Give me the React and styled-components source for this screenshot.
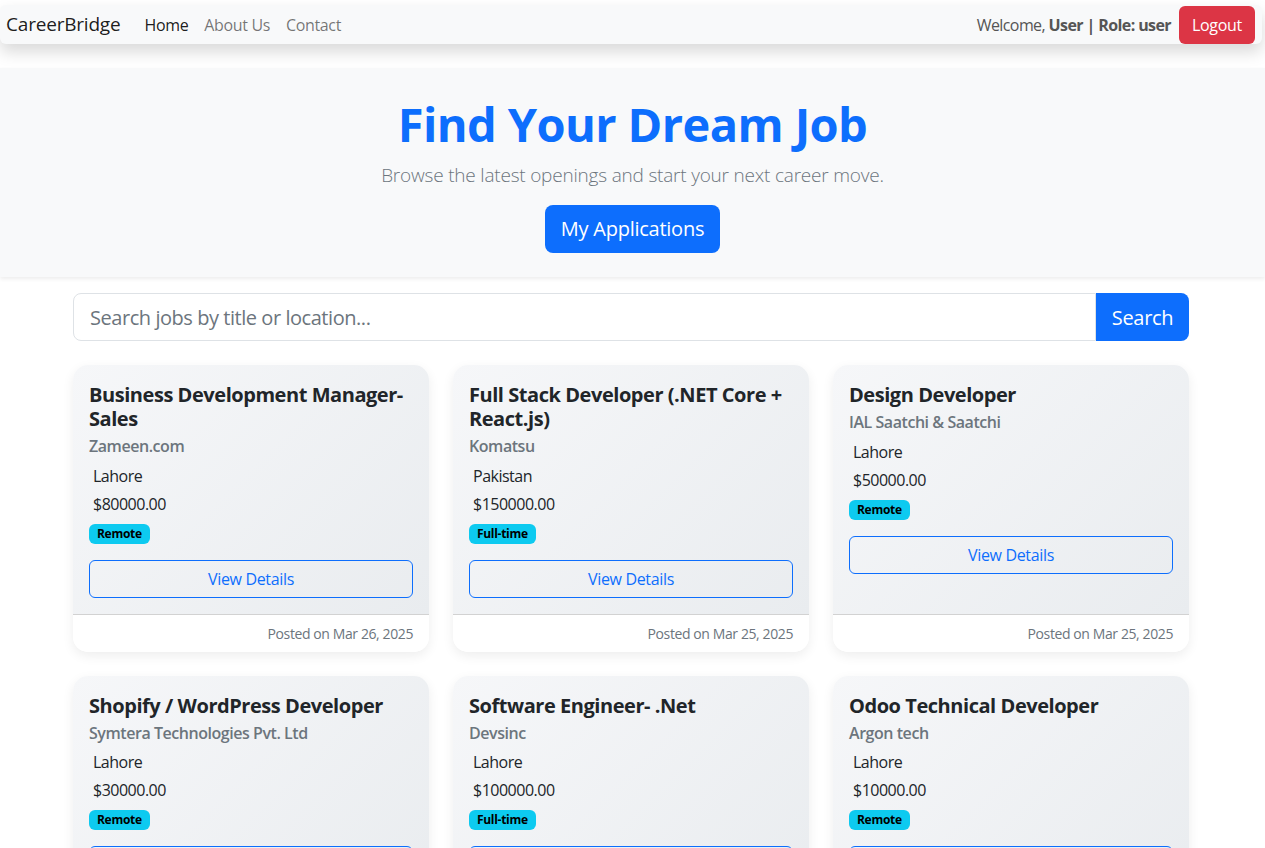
import React from "react";
import styled, { createGlobalStyle } from "styled-components";

const jobs = [
  {
    id: 1,
    title: "Business Development Manager-Sales",
    company: "Zameen.com",
    location: "Lahore",
    salary: "$80000.00",
    type: "Remote",
    posted: "Mar 26, 2025",
  },
  {
    id: 2,
    title: "Full Stack Developer (.NET Core + React.js)",
    company: "Komatsu",
    location: "Pakistan",
    salary: "$150000.00",
    type: "Full-time",
    posted: "Mar 25, 2025",
  },
  {
    id: 3,
    title: "Design Developer",
    company: "IAL Saatchi & Saatchi",
    location: "Lahore",
    salary: "$50000.00",
    type: "Remote",
    posted: "Mar 25, 2025",
  },
  {
    id: 4,
    title: "Shopify / WordPress Developer",
    company: "Symtera Technologies Pvt. Ltd",
    location: "Lahore",
    salary: "$30000.00",
    type: "Remote",
    posted: "Mar 24, 2025",
  },
  {
    id: 5,
    title: "Software Engineer- .Net",
    company: "Devsinc",
    location: "Lahore",
    salary: "$100000.00",
    type: "Full-time",
    posted: "Mar 24, 2025",
  },
  {
    id: 6,
    title: "Odoo Technical Developer",
    company: "Argon tech",
    location: "Lahore",
    salary: "$10000.00",
    type: "Remote",
    posted: "Mar 23, 2025",
  },
];

const App = () => {
  return (
    <>
      <GlobalStyle />
      <Navbar>
        <NavLeft>
          <Brand href="#">CareerBridge</Brand>
          <NavLink href="#" $active>
            Home
          </NavLink>
          <NavLink href="#">About Us</NavLink>
          <NavLink href="#">Contact</NavLink>
        </NavLeft>
        <NavRight>
          <Welcome>
            Welcome, <strong>User | Role: user</strong>
          </Welcome>
          <LogoutButton>Logout</LogoutButton>
        </NavRight>
      </Navbar>

      <Hero>
        <HeroTitle>Find Your Dream Job</HeroTitle>
        <HeroLead>Browse the latest openings and start your next career move.</HeroLead>
        <PrimaryButton>My Applications</PrimaryButton>
      </Hero>

      <Container>
        <SearchGroup>
          <SearchInput placeholder="Search jobs by title or location..." />
          <SearchButton>Search</SearchButton>
        </SearchGroup>

        <JobGrid>
          {jobs.map((job) => (
            <JobCard key={job.id}>
              <CardBody>
                <JobTitle>{job.title}</JobTitle>
                <Company>{job.company}</Company>
                <Info>{job.location}</Info>
                <Info $last>{job.salary}</Info>
                <BadgeRow>
                  <Badge>{job.type}</Badge>
                </BadgeRow>
                <OutlineButton>View Details</OutlineButton>
              </CardBody>
              <CardFooter>Posted on {job.posted}</CardFooter>
            </JobCard>
          ))}
        </JobGrid>
      </Container>
    </>
  );
};

export default App;

const GlobalStyle = createGlobalStyle`
  * {
    box-sizing: border-box;
  }
  body {
    margin: 0;
    background: #fff;
    color: #212529;
    font-family: "Open Sans", "Noto Sans", sans-serif;
    font-size: 16px;
    line-height: 1.5;
  }
  button, input {
    font-family: inherit;
  }
`;

const Navbar = styled.nav`
  display: flex;
  align-items: center;
  justify-content: space-between;
  height: 39px;
  margin: 5px 3px 0 0;
  padding: 0 7px 0 6px;
  background: #f8f9fa;
  border-radius: 6px;
  box-shadow: 0 8px 16px rgba(0, 0, 0, 0.15);
`;

const NavLeft = styled.div`
  display: flex;
  align-items: center;
`;

const Brand = styled.a`
  font-size: 19px;
  letter-spacing: -0.2px;
  color: rgba(0, 0, 0, 0.9);
  text-decoration: none;
  margin-right: 16px;
`;

const NavLink = styled.a`
  padding: 8px;
  font-size: 16px;
  letter-spacing: -0.35px;
  text-decoration: none;
  color: ${({ $active }) => ($active ? "rgba(0, 0, 0, 0.9)" : "rgba(0, 0, 0, 0.55)")};
`;

const NavRight = styled.div`
  display: flex;
  align-items: center;
  gap: 8px;
`;

const Welcome = styled.span`
  color: #555;
  font-size: 16px;
  letter-spacing: -0.6px;
  strong {
    font-weight: 700;
  }
`;

const LogoutButton = styled.button`
  height: 38px;
  padding: 6px 13px;
  border: none;
  border-radius: 6px;
  background: #dc3545;
  color: #fff;
  font-size: 16px;
  line-height: 24px;
  letter-spacing: -0.3px;
`;

const Hero = styled.header`
  margin-top: 24px;
  padding: 28px 0 24px;
  text-align: center;
  background: #f8f9fa;
  box-shadow: 0 2px 4px rgba(0, 0, 0, 0.075);
`;

const HeroTitle = styled.h1`
  margin: 0 0 8px;
  font-size: 47px;
  font-weight: 700;
  line-height: 1.2;
  letter-spacing: -0.6px;
  color: #0d6efd;
`;

const HeroLead = styled.p`
  margin: 0 0 15px;
  font-size: 19px;
  font-weight: 300;
  line-height: 30px;
  letter-spacing: -0.2px;
  color: #6c757d;
`;

const PrimaryButton = styled.button`
  height: 48px;
  padding: 8px 16px;
  border: none;
  border-radius: 8px;
  background: #0d6efd;
  color: #fff;
  font-size: 20px;
  line-height: 30px;
  letter-spacing: -0.25px;
`;

const Container = styled.main`
  width: 1116px;
  margin: 16px 0 0 calc((100% - 1116px) / 2 - 1.5px);
`;

const SearchGroup = styled.div`
  display: flex;
  height: 48px;
`;

const SearchInput = styled.input`
  flex: 1;
  min-width: 0;
  padding: 8px 16px;
  border: 1px solid #dee2e6;
  border-radius: 8px 0 0 8px;
  font-size: 20px;
  letter-spacing: -0.45px;
  color: #212529;
  outline: none;
  &::placeholder {
    color: #6c757d;
  }
`;

const SearchButton = styled.button`
  width: 93px;
  border: none;
  border-radius: 0 8px 8px 0;
  background: #0d6efd;
  color: #fff;
  font-size: 20px;
  letter-spacing: -0.3px;
`;

const JobGrid = styled.section`
  display: grid;
  grid-template-columns: repeat(3, 1fr);
  gap: 24px;
  margin: 24px 0 40px;
`;

const JobCard = styled.article`
  display: flex;
  flex-direction: column;
  border-radius: 15px;
  overflow: hidden;
  background: #fff;
  box-shadow: 0 4px 12px rgba(0, 0, 0, 0.07);
`;

const CardBody = styled.div`
  flex: 1;
  padding: 18px 16px 16px;
  background: linear-gradient(135deg, #f6f7f9 0%, #e9ecef 100%);
`;

const JobTitle = styled.h5`
  margin: 0 0 6px;
  font-size: 20px;
  font-weight: 700;
  line-height: 1.2;
  letter-spacing: -0.45px;
  color: #212529;
`;

const Company = styled.h6`
  margin: 0 0 7px;
  font-size: 16px;
  font-weight: 600;
  line-height: 1.2;
  letter-spacing: -0.45px;
  color: #6c757d;
`;

const Info = styled.p`
  margin: 0 0 ${({ $last }) => ($last ? "8px" : "4px")};
  padding-left: 4px;
  font-size: 16px;
  line-height: 24px;
  letter-spacing: -0.5px;
`;

const BadgeRow = styled.div`
  display: flex;
  margin-bottom: 16px;
`;

const Badge = styled.span`
  padding: 4px 8px;
  border-radius: 6px;
  background: #0dcaf0;
  color: #000;
  font-size: 12px;
  font-weight: 700;
  line-height: 12px;
  letter-spacing: -0.3px;
`;

const OutlineButton = styled.button`
  width: 100%;
  height: 38px;
  padding: 6px 12px;
  border: 1px solid #0d6efd;
  border-radius: 6px;
  background: transparent;
  color: #0d6efd;
  font-size: 16px;
  line-height: 24px;
  letter-spacing: -0.35px;
`;

const CardFooter = styled.footer`
  padding: 8px 16px;
  border-top: 1px solid rgba(0, 0, 0, 0.175);
  background: #fff;
  text-align: right;
  font-size: 14px;
  line-height: 21px;
  letter-spacing: -0.4px;
  color: #6c757d;
`;
